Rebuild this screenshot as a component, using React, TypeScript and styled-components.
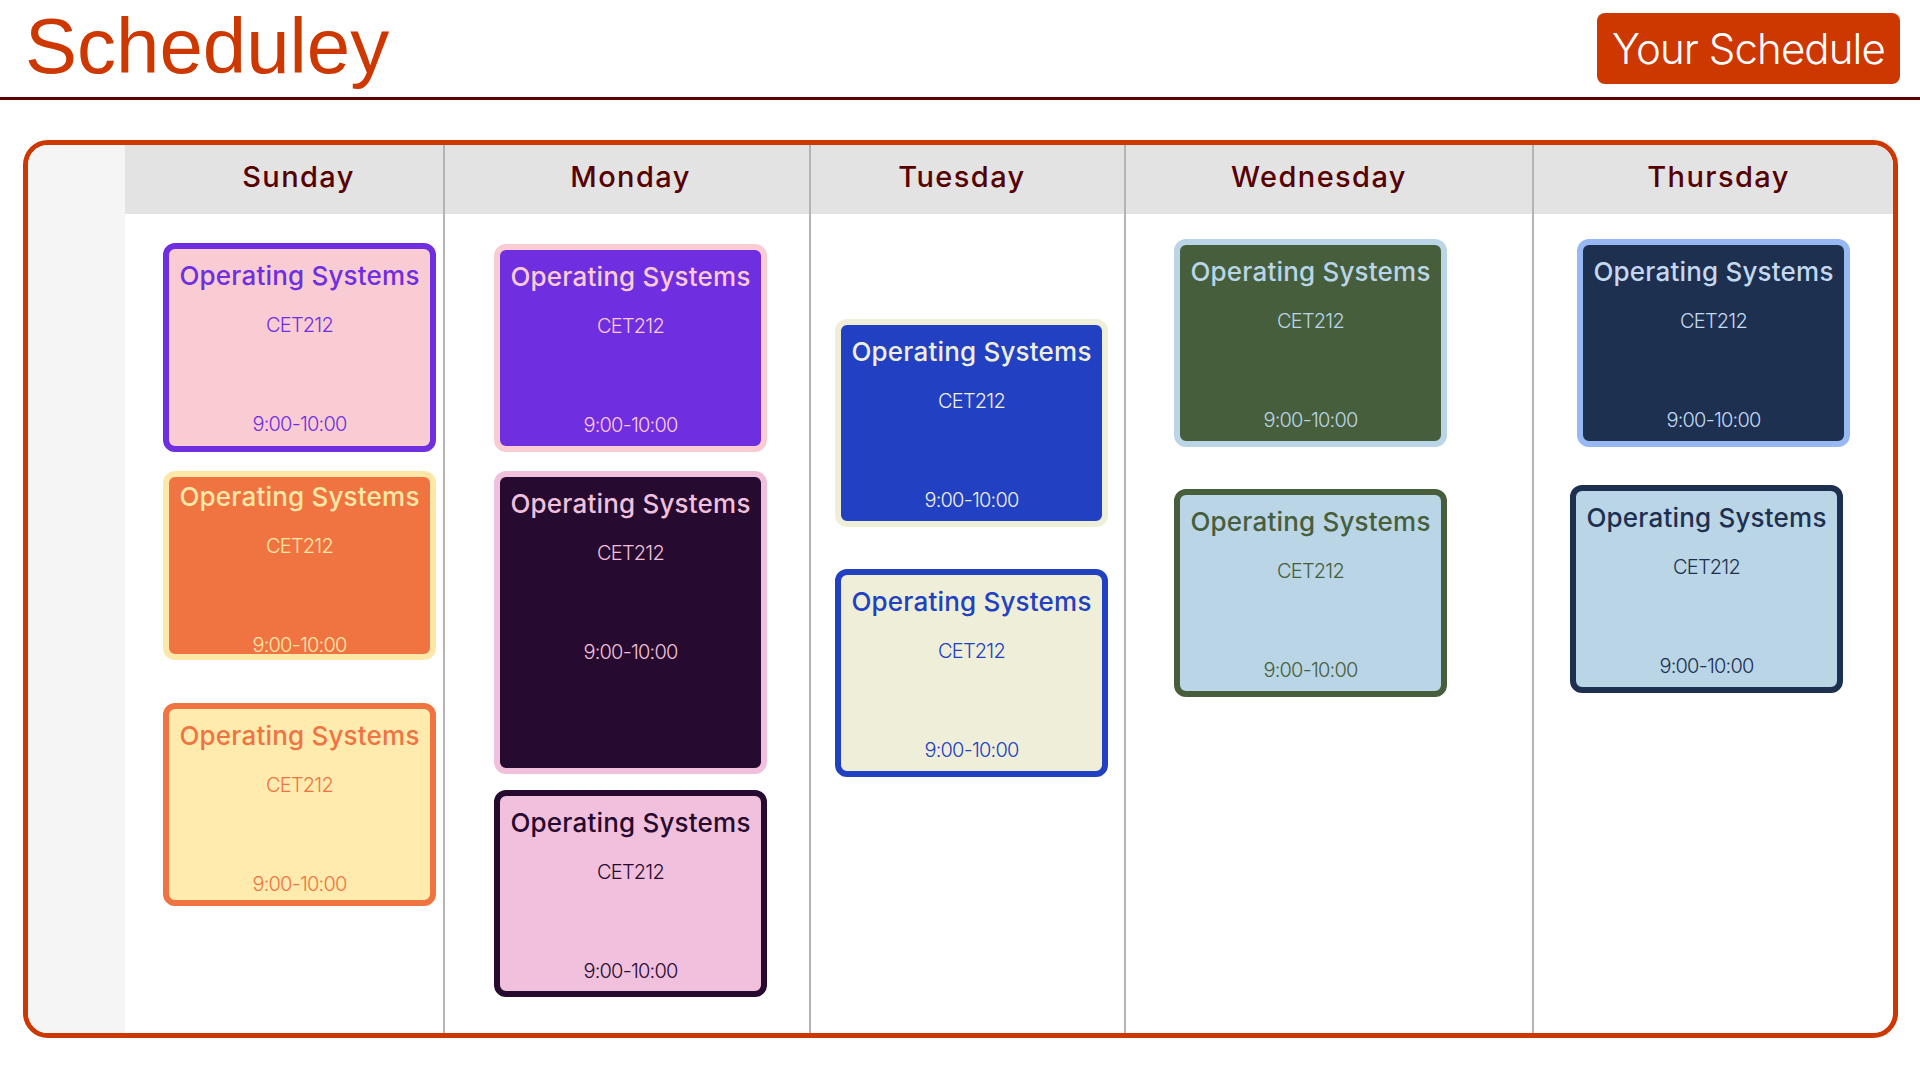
import React from 'react'
import styled, {createGlobalStyle} from 'styled-components'

const BRAND = '#cd3700'

const GlobalStyle = createGlobalStyle`
  body {
    margin: 0;
    background: #ffffff;
    font-family: Inter, "Noto Sans", sans-serif;
  }
`

type Course = {
  border: string
  bg: string
  text: string
  gapAbove: number
  h?: number
  padTop?: number
  nudge?: number
}

type Day = {
  name: string
  labelShift: number
  inset: number
  courses: Course[]
}

const DAYS: Day[] = [
  {
    name: 'Sunday',
    labelShift: 29,
    inset: 38,
    courses: [
      {border: '#6f2ee0', bg: '#f9ccd3', text: '#6f2ee0', gapAbove: 29},
      {border: '#fde8a8', bg: '#f07442', text: '#fde8a8', gapAbove: 19, h: 189, padTop: 5},
      {border: '#f07442', bg: '#ffebae', text: '#f07442', gapAbove: 43, h: 203},
    ],
  },
  {
    name: 'Monday',
    labelShift: 7,
    inset: 49,
    courses: [
      {border: '#f9ccd3', bg: '#6f2ee0', text: '#f9ccd3', gapAbove: 30, h: 208},
      {border: '#f1c0dc', bg: '#260a2f', text: '#f1c0dc', gapAbove: 19, h: 303},
      {border: '#260a2f', bg: '#f1c0dc', text: '#260a2f', gapAbove: 16, h: 207},
    ],
  },
  {
    name: 'Tuesday',
    labelShift: -11,
    inset: 24,
    courses: [
      {border: '#efefd9', bg: '#2140c2', text: '#efefd9', gapAbove: 105, h: 208},
      {border: '#2140c2', bg: '#efefd9', text: '#2140c2', gapAbove: 42, h: 208},
    ],
  },
  {
    name: 'Wednesday',
    labelShift: -20,
    inset: 48,
    courses: [
      {border: '#b9d5e6', bg: '#475e3c', text: '#b9d5e6', gapAbove: 25, h: 208},
      {border: '#475e3c', bg: '#b9d5e6', text: '#475e3c', gapAbove: 42, h: 208},
    ],
  },
  {
    name: 'Thursday',
    labelShift: 10,
    inset: 43,
    courses: [
      {border: '#97b8f2', bg: '#1d3050', text: '#c4d8f0', gapAbove: 25, h: 208},
      {border: '#1d3050', bg: '#b9d5e6', text: '#1d3050', gapAbove: 38, h: 208, nudge: -7},
    ],
  },
]

const App = () => {
  return (
    <>
      <GlobalStyle />
      <StyledHeader>
        <StyledLogo>Scheduley</StyledLogo>
        <StyledButton>Your Schedule</StyledButton>
      </StyledHeader>
      <StyledBoard>
        <StyledTimeColumn />
        {DAYS.map((day, i) => (
          <StyledDayColumn key={day.name} $first={i === 0}>
            <StyledDayHeader $shift={day.labelShift}>{day.name}</StyledDayHeader>
            <StyledStack $inset={day.inset}>
              {day.courses.map((c, j) => (
                <StyledCard
                  key={j}
                  $border={c.border}
                  $bg={c.bg}
                  $text={c.text}
                  $gap={c.gapAbove}
                  $h={c.h ?? 209}
                  $padTop={c.padTop ?? 12}
                  $nudge={c.nudge ?? 0}
                >
                  <StyledTitle>Operating Systems</StyledTitle>
                  <StyledCode>CET212</StyledCode>
                  <StyledTime>9:00-10:00</StyledTime>
                </StyledCard>
              ))}
            </StyledStack>
          </StyledDayColumn>
        ))}
      </StyledBoard>
    </>
  )
}

const StyledHeader = styled.header`
  height: 97px;
  display: flex;
  justify-content: space-between;
  align-items: flex-start;
  padding: 0 20px 0 25px;
  border-bottom: 3px solid #5a0000;
`

const StyledLogo = styled.h1`
  margin: 7px 0 0;
  font-family: "Liberation Sans", Arial, sans-serif;
  font-weight: 400;
  font-size: 78px;
  line-height: 78px;
  color: ${BRAND};
`

const StyledButton = styled.button`
  margin-top: 13px;
  width: 303px;
  height: 71px;
  border: none;
  border-radius: 8px;
  background: ${BRAND};
  color: #ffffff;
  font-family: Inter, sans-serif;
  font-weight: 300;
  font-size: 42px;
  letter-spacing: -0.9px;
  padding: 0;
  cursor: pointer;
`

const StyledBoard = styled.main`
  margin: 40px 22px 0 23px;
  height: 898px;
  box-sizing: border-box;
  border: 5px solid ${BRAND};
  border-radius: 25px;
  overflow: hidden;
  display: grid;
  grid-template-columns: 97px 318px 366px 315px 408px 1fr;
`

const StyledTimeColumn = styled.div`
  background: #f5f5f5;
`

const StyledDayColumn = styled.section<{$first: boolean}>`
  display: flex;
  flex-direction: column;
  border-left: ${p => (p.$first ? 'none' : '2px solid #b4b4b4')};
`

const StyledDayHeader = styled.div<{$shift: number}>`
  box-sizing: border-box;
  height: 69px;
  flex-shrink: 0;
  background: #e3e3e3;
  display: flex;
  align-items: center;
  justify-content: center;
  padding-bottom: 6px;
  padding-left: ${p => Math.max(p.$shift, 0)}px;
  padding-right: ${p => Math.max(-p.$shift, 0)}px;
  font-weight: 500;
  font-size: 29px;
  letter-spacing: 1.4px;
  color: #560000;
`

const StyledStack = styled.div<{$inset: number}>`
  display: flex;
  flex-direction: column;
  align-items: flex-start;
  padding-left: ${p => p.$inset}px;
`

const StyledCard = styled.div<{
  $border: string
  $bg: string
  $text: string
  $gap: number
  $h: number
  $padTop: number
  $nudge: number
}>`
  box-sizing: border-box;
  width: 273px;
  height: ${p => p.$h}px;
  margin-top: ${p => p.$gap}px;
  margin-left: ${p => p.$nudge}px;
  padding: ${p => p.$padTop}px 2px 0;
  border: 6px solid ${p => p.$border};
  border-radius: 12px;
  background: ${p => p.$bg};
  color: ${p => p.$text};
  display: flex;
  flex-direction: column;
  align-items: center;
  text-align: center;
`

const StyledTitle = styled.div`
  font-weight: 500;
  font-size: 26px;
  line-height: 30px;
  letter-spacing: 0.2px;
  white-space: nowrap;
`

const StyledCode = styled.div`
  margin-top: 22px;
  font-weight: 300;
  font-size: 20px;
  line-height: 24px;
  letter-spacing: -0.8px;
`

const StyledTime = styled.div`
  margin-top: 75px;
  font-weight: 300;
  font-size: 20px;
  line-height: 24px;
  letter-spacing: -0.8px;
`

export default App
